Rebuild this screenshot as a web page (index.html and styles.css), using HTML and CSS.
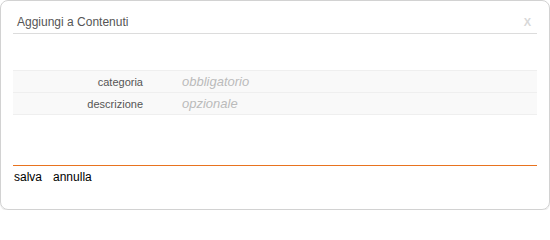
FILE: index.html
```html
<!DOCTYPE html>
<html lang="it">
<head>
<meta charset="utf-8">
<title>Aggiungi a Contenuti</title>
<link rel="stylesheet" href="styles.css">
</head>
<body>
<div class="dialog">
  <div class="header">
    <span class="title">Aggiungi a Contenuti</span>
    <span class="close">X</span>
  </div>
  <div class="form">
    <div class="row">
      <span class="label">categoria</span>
      <span class="value">obbligatorio</span>
    </div>
    <div class="row">
      <span class="label">descrizione</span>
      <span class="value">opzionale</span>
    </div>
  </div>
  <div class="footer">
    <a class="action">salva</a>
    <a class="action">annulla</a>
  </div>
</div>
</body>
</html>
```
FILE: styles.css
```css
html, body {
  margin: 0;
  padding: 0;
  background: #fff;
}
body {
  font-family: "Liberation Sans", Arial, sans-serif;
}
.dialog {
  box-sizing: border-box;
  width: 550px;
  height: 210px;
  border: 1px solid #d2d2d2;
  border-radius: 8px;
  box-shadow: 0 1px 1px #e6e6e6;
  padding: 0 12px 0 12px;
  display: flex;
  flex-direction: column;
}
.header {
  display: flex;
  justify-content: space-between;
  align-items: baseline;
  padding: 13px 6px 3px 4px;
  line-height: 16px;
  border-bottom: 1px solid #dcdcdc;
}
.title {
  font-size: 12px;
  color: #555;
}
.close {
  font-size: 11px;
  font-weight: bold;
  color: #d8d8d8;
}
.form {
  margin-top: 36px;
  border-bottom: 1px solid #efefef;
}
.row {
  display: flex;
  align-items: baseline;
  background: #f9f9f9;
  border-top: 1px solid #efefef;
  padding-top: 1px;
  line-height: 20px;
}
.label {
  width: 130px;
  text-align: right;
  font-size: 11px;
  color: #555;
}
.value {
  margin-left: 39px;
  font-size: 13px;
  font-style: italic;
  color: #bbb;
}
.footer {
  margin-top: 50px;
  border-top: 1px solid #e8731f;
  padding: 4px 0 0 1px;
  display: flex;
  gap: 11px;
  line-height: 14px;
}
.action {
  font-size: 12px;
  color: #000;
  cursor: pointer;
}
```
